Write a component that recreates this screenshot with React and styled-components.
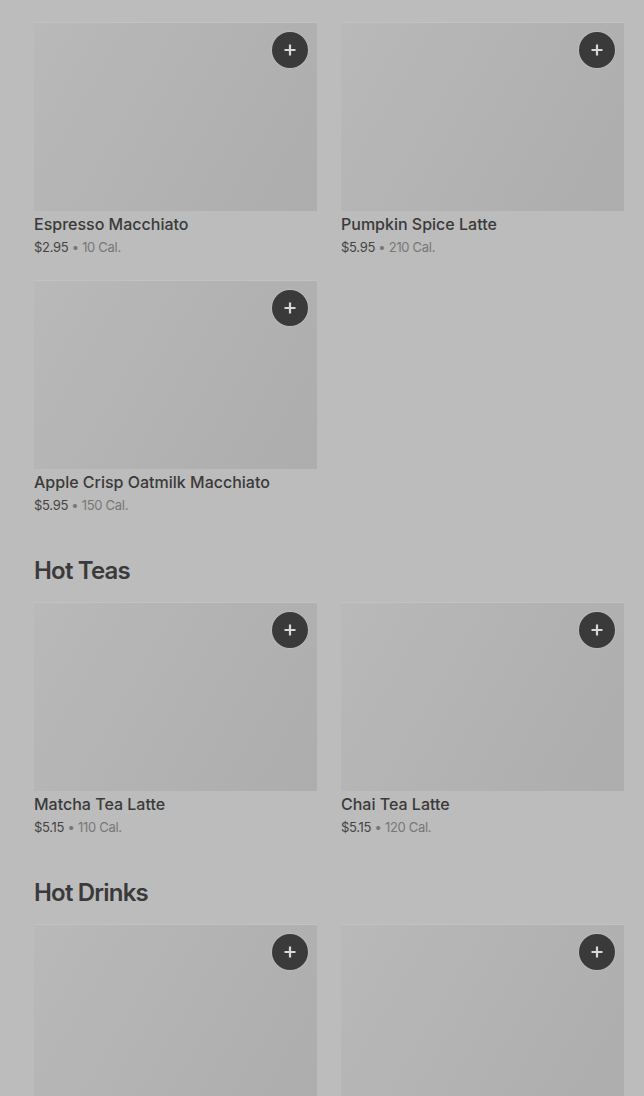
import styled, { createGlobalStyle } from "styled-components";

const GlobalStyle = createGlobalStyle`
  html, body {
    margin: 0;
    padding: 0;
    background: #bcbcbc;
  }
  body {
    font-family: Inter, "Noto Sans", "Liberation Sans", sans-serif;
    color: #393939;
  }
`;

const sections = [
  {
    title: null,
    items: [
      { name: "Espresso Macchiato", price: "$2.95", cal: "10 Cal." },
      { name: "Pumpkin Spice Latte", price: "$5.95", cal: "210 Cal." },
      { name: "Apple Crisp Oatmilk Macchiato", price: "$5.95", cal: "150 Cal." },
    ],
  },
  {
    title: "Hot Teas",
    items: [
      { name: "Matcha Tea Latte", price: "$5.15", cal: "110 Cal." },
      { name: "Chai Tea Latte", price: "$5.15", cal: "120 Cal." },
    ],
  },
  {
    title: "Hot Drinks",
    items: [
      { name: "Hot Chocolate", price: "$4.25", cal: "370 Cal." },
      { name: "Steamed Milk", price: "$3.45", cal: "200 Cal." },
    ],
  },
];

export default function App() {
  return (
    <>
      <GlobalStyle />
      <Page>
        {sections.map((section, i) => (
          <Section key={i}>
            {section.title && <Heading>{section.title}</Heading>}
            <Grid>
              {section.items.map((item) => (
                <Card key={item.name}>
                  <Thumb>
                    <AddButton aria-label="Add">
                      <svg width="14" height="14" viewBox="0 0 14 14">
                        <path
                          d="M7 1.5v11M1.5 7h11"
                          stroke="#d8d8d8"
                          strokeWidth="2.2"
                          fill="none"
                        />
                      </svg>
                    </AddButton>
                  </Thumb>
                  <Name>{item.name}</Name>
                  <Meta>
                    <Price>{item.price}</Price>
                    <Cal> • {item.cal}</Cal>
                  </Meta>
                </Card>
              ))}
            </Grid>
          </Section>
        ))}
      </Page>
    </>
  );
}

const Page = styled.main`
  padding: 22px 20px 0 34px;
  display: flex;
  flex-direction: column;
  gap: 41px;
`;

const Section = styled.section`
  display: flex;
  flex-direction: column;
  gap: 15px;
`;

const Heading = styled.h2`
  margin: 0;
  font-size: 24px;
  line-height: 32px;
  font-weight: 600;
  letter-spacing: -0.8px;
  color: #3a3a3a;
`;

const Grid = styled.div`
  display: grid;
  grid-template-columns: 283px 283px;
  column-gap: 24px;
  row-gap: 24px;
`;

const Card = styled.div`
  display: flex;
  flex-direction: column;
`;

const Thumb = styled.div`
  position: relative;
  height: 188px;
  border-top: 1px solid #c2c2c2;
  background: linear-gradient(120deg, #b9b9b9 0%, #b3b3b3 45%, #adadad 100%);
`;

const AddButton = styled.button`
  position: absolute;
  top: 9px;
  right: 9px;
  width: 36px;
  height: 36px;
  border: none;
  border-radius: 50%;
  background: #3a3a3a;
  box-shadow: 0 0 0 1px rgba(255, 255, 255, 0.12);
  display: flex;
  align-items: center;
  justify-content: center;
  padding: 0;
  cursor: pointer;
`;

const Name = styled.div`
  margin-top: 3px;
  font-size: 16px;
  line-height: 20px;
  font-weight: 500;
  color: #3a3a3a;
`;

const Meta = styled.div`
  margin-top: 4px;
  font-size: 13px;
  line-height: 18px;
  letter-spacing: -0.3px;
`;

const Price = styled.span`
  color: #444;
`;

const Cal = styled.span`
  color: #777;
`;
